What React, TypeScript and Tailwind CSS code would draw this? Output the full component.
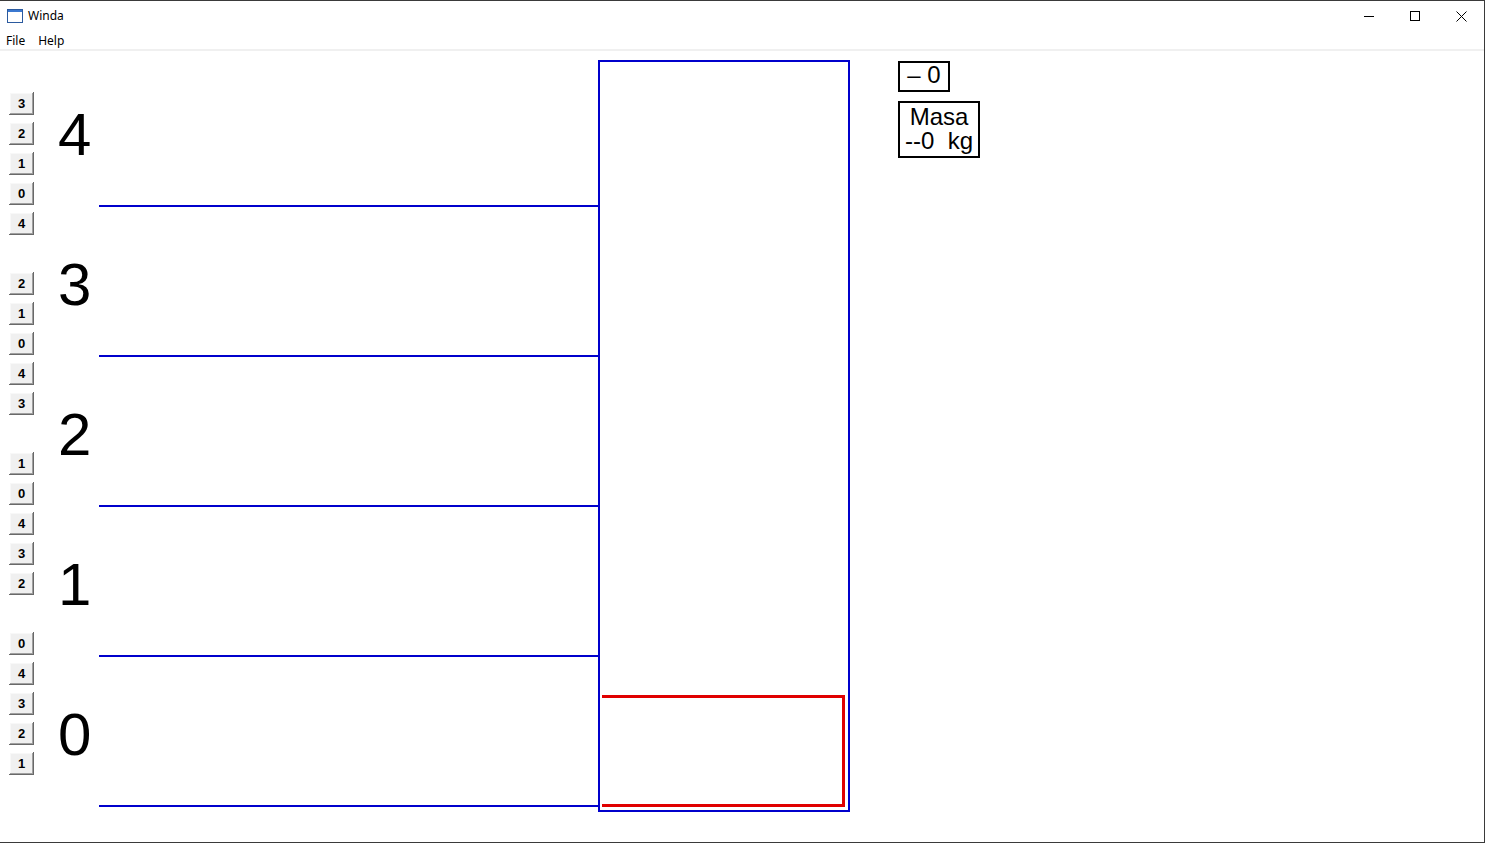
import React from "react";

const groups: string[][] = [
  ["3", "2", "1", "0", "4"],
  ["2", "1", "0", "4", "3"],
  ["1", "0", "4", "3", "2"],
  ["0", "4", "3", "2", "1"],
];

const floors = ["4", "3", "2", "1", "0"];

function FloorButton({ label }: { label: string }) {
  return (
    <button
      className="w-[25px] h-[23px] bg-[#f0f0f0] flex items-center justify-center text-[13px] font-bold text-black leading-none shadow-[inset_-1px_-1px_#696969,inset_1px_1px_#ffffff,inset_-2px_-2px_#a0a0a0,inset_2px_2px_#f8f8f8]"
      style={{ fontFamily: '"Liberation Sans", Arial, sans-serif' }}
    >
      {label}
    </button>
  );
}

export default function App() {
  return (
    <div
      className="w-[1485px] h-[843px] bg-white border-t border-r border-b border-[#3a3a3a] flex flex-col overflow-hidden"
      style={{ fontFamily: '"Noto Sans", "Open Sans", sans-serif' }}
    >
      {/* Title bar */}
      <div className="h-[30px] flex items-center shrink-0">
        <div className="pl-[7px] pr-[5px] flex items-center">
          <svg width="16" height="14" viewBox="0 0 16 14">
            <rect x="0.5" y="0.5" width="15" height="13" fill="#ffffff" stroke="#2b5a9e" />
            <rect x="1" y="1" width="14" height="2" fill="#3b78d0" />
          </svg>
        </div>
        <span className="text-[12px] text-black">Winda</span>
        <div className="ml-auto flex h-full">
          <div className="w-[46px] h-full flex items-center justify-center">
            <svg width="10" height="10" viewBox="0 0 10 10">
              <line x1="0" y1="5.5" x2="10" y2="5.5" stroke="#000" strokeWidth="1" />
            </svg>
          </div>
          <div className="w-[46px] h-full flex items-center justify-center">
            <svg width="10" height="10" viewBox="0 0 10 10">
              <rect x="0.5" y="0.5" width="9" height="9" fill="none" stroke="#000" strokeWidth="1" />
            </svg>
          </div>
          <div className="w-[46px] h-full flex items-center justify-center">
            <svg width="11" height="11" viewBox="0 0 11 11">
              <line x1="0.5" y1="0.5" x2="10.5" y2="10.5" stroke="#000" strokeWidth="1" />
              <line x1="10.5" y1="0.5" x2="0.5" y2="10.5" stroke="#000" strokeWidth="1" />
            </svg>
          </div>
        </div>
      </div>

      {/* Menu bar */}
      <div className="h-[18px] pt-[2px] flex items-center text-[12px] text-black shrink-0">
        <span className="pl-[6px]">File</span>
        <span className="pl-[13px]">Help</span>
      </div>
      <div className="h-[2px] bg-[#f0f0f0] shrink-0" />

      {/* Client area */}
      <div className="flex-1 flex" style={{ fontFamily: '"Liberation Sans", Arial, sans-serif' }}>
        {/* Buttons column */}
        <div className="w-[58px] shrink-0 pl-[9px] pt-[41px] flex flex-col gap-[37px]">
          {groups.map((g, gi) => (
            <div key={gi} className="flex flex-col gap-[7px]">
              {g.map((b, bi) => (
                <FloorButton key={bi} label={b} />
              ))}
            </div>
          ))}
        </div>

        {/* Floors column */}
        <div className="w-[540px] shrink-0 pt-[6px] flex flex-col">
          {floors.map((f) => (
            <div key={f} className="h-[150px] flex flex-col">
              <div className="mt-[48px] text-[60px] leading-none text-black">{f}</div>
              <div className="mt-auto ml-[41px] h-[2px] bg-[#0000cc]" />
            </div>
          ))}
        </div>

        {/* Shaft */}
        <div className="mt-[9px] w-[252px] h-[752px] border-2 border-[#0000cc] shrink-0 flex flex-col justify-end pl-[2px] pr-[3px] pb-[3px]">
          <div className="h-[112px] border-t-[3px] border-r-[3px] border-b-[3px] border-[#e00000]" />
        </div>

        {/* Info boxes */}
        <div className="ml-[48px] pt-[10px] flex flex-col items-start">
          <div className="w-[52px] h-[31px] pb-[3px] border-2 border-black flex items-center justify-center text-[24px] leading-none text-black whitespace-pre">
            – 0
          </div>
          <div className="mt-[9px] w-[82px] h-[57px] pb-[2px] border-2 border-black flex flex-col items-center justify-center text-[24px] leading-[24px] text-black whitespace-pre">
            <span>Masa</span>
            <span>--0  kg</span>
          </div>
        </div>
      </div>
    </div>
  );
}
